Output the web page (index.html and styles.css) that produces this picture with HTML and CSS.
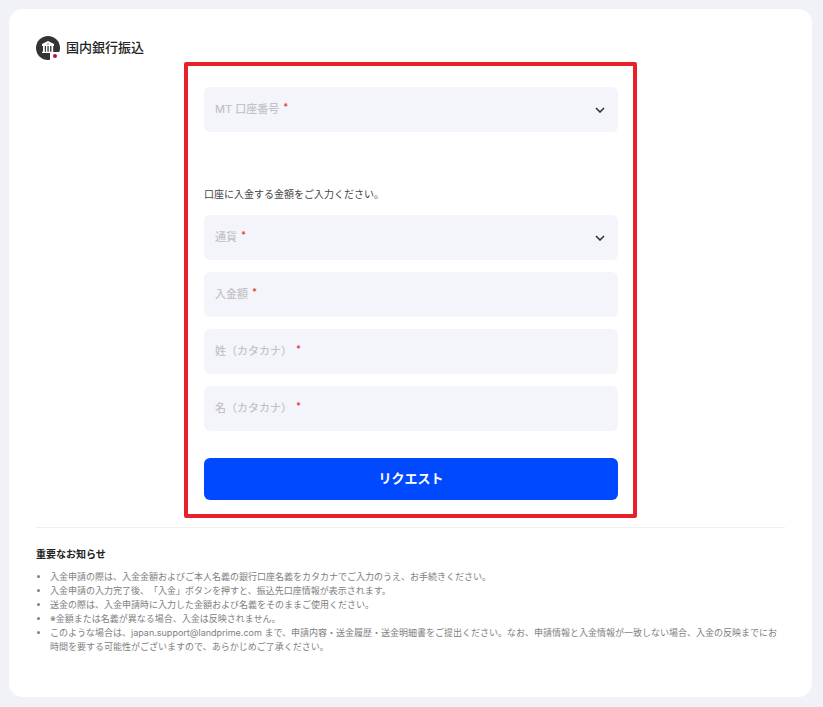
FILE: index.html
```html
<!DOCTYPE html>
<html lang="ja">
<head>
<meta charset="utf-8">
<meta name="viewport" content="width=device-width, initial-scale=1">
<title>国内銀行振込</title>
<link rel="stylesheet" href="styles.css">
</head>
<body>
<main class="card">
  <header class="card-header">
    <svg class="bank-icon" viewBox="0 0 24 24" aria-hidden="true">
      <circle cx="12" cy="12" r="12" fill="#333435"/>
      <path d="M12 5 6 8v2h12V8z" fill="#fff"/>
      <circle cx="12" cy="8" r=".8" fill="#777"/>
      <path d="M7 10h1.8v6H7zM10 10h1.4v6H10zM12.7 10h1.4v6h-1.4zM15.4 10h1.8v6h-1.8zM6 15.8h9v1.2H6z" fill="#fff"/>
      <rect x="14" y="16" width="10" height="8" fill="#fff"/>
      <circle cx="19" cy="20" r="2" fill="#b3123f"/>
    </svg>
    <h1 class="title">国内銀行振込</h1>
  </header>

  <form class="form">
    <div class="field">
      <select class="control" id="account" required><option value=""></option></select>
      <label class="label" for="account">MT 口座番号<span class="required">*</span></label>
      <svg class="chevron" viewBox="0 0 10 6" aria-hidden="true"><path d="M1 1l4 4 4-4"/></svg>
    </div>

    <p class="intro">口座に入金する金額をご入力ください。</p>

    <div class="fields">
      <div class="field">
        <select class="control" id="currency" required><option value=""></option></select>
        <label class="label" for="currency">通貨<span class="required">*</span></label>
        <svg class="chevron" viewBox="0 0 10 6" aria-hidden="true"><path d="M1 1l4 4 4-4"/></svg>
      </div>
      <div class="field">
        <input class="control" id="amount" type="text" inputmode="decimal" required>
        <label class="label" for="amount">入金額<span class="required">*</span></label>
      </div>
      <div class="field">
        <input class="control" id="last-name" type="text" required>
        <label class="label" for="last-name">姓（カタカナ）<span class="required">*</span></label>
      </div>
      <div class="field">
        <input class="control" id="first-name" type="text" required>
        <label class="label" for="first-name">名（カタカナ）<span class="required">*</span></label>
      </div>
    </div>

    <button class="submit" type="submit">リクエスト</button>
  </form>

  <section class="notice">
    <h2 class="notice-title">重要なお知らせ</h2>
    <ul class="notice-list">
      <li>入金申請の際は、入金金額およびご本人名義の銀行口座名義をカタカナでご入力のうえ、お手続きください。</li>
      <li>入金申請の入力完了後、「入金」ボタンを押すと、振込先口座情報が表示されます。</li>
      <li>送金の際は、入金申請時に入力した金額および名義をそのままご使用ください。</li>
      <li>※金額または名義が異なる場合、入金は反映されません。</li>
      <li>このような場合は、japan.support@landprime.com まで、申請内容・送金履歴・送金明細書をご提出ください。なお、申請情報と入金情報が一致しない場合、入金の反映までにお時間を要する可能性がございますので、あらかじめご了承ください。</li>
    </ul>
  </section>
</main>
</body>
</html>
```
FILE: styles.css
```css
* {
  box-sizing: border-box;
}

body {
  margin: 0;
  padding: 9px 11px 10px 9px;
  background: #f1f2f7;
  color: #222;
  font-family: Inter, "Noto Sans CJK JP", sans-serif;
  text-spacing-trim: space-all;
}

.card {
  padding: 27px 27px 43px;
  border-radius: 14px;
  background: #fff;
}

.card-header {
  display: flex;
  align-items: flex-start;
  gap: 6px;
  height: 24px;
}

.bank-icon {
  width: 24px;
  height: 24px;
}

.title {
  margin: 0;
  font-size: 13px;
  font-weight: 500;
  line-height: 22px;
}

.form {
  max-width: 453px;
  margin: 2px auto 9px;
  padding: 21px 15px 14px 16px;
  border: 4px solid #e8202a;
  border-radius: 2px;
}

.fields {
  display: grid;
  gap: 12px;
}

.field {
  position: relative;
  height: 45px;
}

.control {
  display: block;
  width: 100%;
  height: 100%;
  padding: 0 11px;
  border: 0;
  border-radius: 6px;
  appearance: none;
  background: #f4f5fa;
  color: #333;
  font: inherit;
  font-size: 11px;
}

.label {
  position: absolute;
  top: 14px;
  left: 11px;
  display: flex;
  gap: 4px;
  color: #c3c3c5;
  font-size: 11px;
  font-weight: 500;
  line-height: 16px;
  pointer-events: none;
}

.required {
  color: #e5484d;
  font-size: 9px;
  font-weight: 700;
  line-height: 12px;
}

.chevron {
  position: absolute;
  top: 20px;
  right: 13px;
  width: 10px;
  height: 6px;
  fill: none;
  stroke: #333;
  stroke-width: 1.6;
  pointer-events: none;
}

.intro {
  margin: 54px 0 13px;
  color: #444;
  font-size: 10px;
  line-height: 16px;
}

.submit {
  display: block;
  width: 100%;
  height: 42px;
  margin-top: 27px;
  padding: 0 0 4px;
  border: 0;
  border-radius: 6px;
  background: #0049ff;
  color: #fff;
  font: inherit;
  font-size: 13px;
  font-weight: 700;
}

.notice {
  padding-top: 18px;
  border-top: 1px solid #eee;
}

.notice-title {
  margin: 0 0 8px;
  font-size: 10px;
  font-weight: 700;
  line-height: 16px;
}

.notice-list {
  margin: 0;
  padding-left: 14px;
  color: #808080;
  font-size: 9px;
  line-height: 14px;
}
```
